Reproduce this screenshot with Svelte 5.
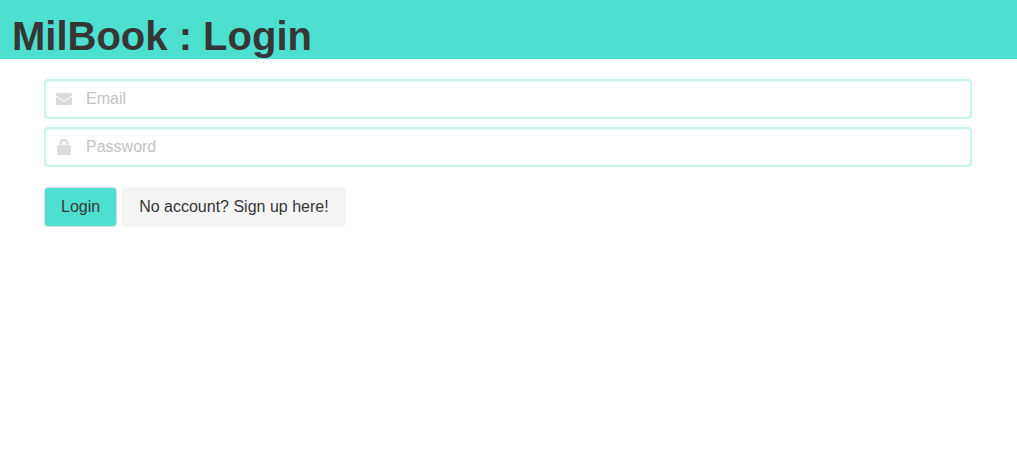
<script>
  let email = $state('');
  let password = $state('');
</script>

<header>
  <h1>MilBook : Login</h1>
</header>
<main>
  <form onsubmit={(e) => e.preventDefault()}>
    <div class="control">
      <input type="email" placeholder="Email" aria-label="Email" bind:value={email} />
      <span class="icon">
        <svg width="16" height="16" viewBox="0 0 512 512" aria-hidden="true">
          <path fill="currentColor" d="M48 64C21.5 64 0 85.5 0 112c0 15.1 7.1 29.3 19.2 38.4L236.800 313.600c11.400 8.500 27 8.500 38.400 0L492.800 150.400c12.100-9.100 19.200-23.300 19.200-38.400 0-26.500-21.500-48-48-48H48zM0 176v208c0 35.300 28.700 64 64 64h384c35.300 0 64-28.700 64-64V176L294.400 339.200c-22.800 17.100-54 17.100-76.800 0L0 176z" />
        </svg>
      </span>
    </div>
    <div class="control">
      <input type="password" placeholder="Password" aria-label="Password" bind:value={password} />
      <span class="icon">
        <svg width="14" height="16" viewBox="0 0 448 512" aria-hidden="true">
          <path fill="currentColor" d="M144 144v48h160v-48c0-44.200-35.800-80-80-80s-80 35.800-80 80zM80 192v-48C80 64.500 144.500 0 224 0s144 64.500 144 144v48h16c35.300 0 64 28.700 64 64v192c0 35.300-28.700 64-64 64H64c-35.300 0-64-28.700-64-64V256c0-35.300 28.700-64 64-64h16z" />
        </svg>
      </span>
    </div>
    <div class="actions">
      <button class="primary" type="submit">Login</button>
      <button class="light" type="button">No account? Sign up here!</button>
    </div>
  </form>
</main>

<style>
  :global(body) {
    background: #fff;
    font-family: "Liberation Sans", Arial, sans-serif;
    font-size: 16px;
  }
  header {
    padding: 14px 12px 0;
    background: #4ddfd0;
  }
  h1 {
    margin: 0;
    color: #363636;
    font-size: 40px;
    font-weight: 700;
    line-height: 45px;
  }
  main {
    padding: 20px 45px 20px 44px;
  }
  form {
    display: flex;
    flex-direction: column;
    gap: 8px;
  }
  .control {
    position: relative;
  }
  input {
    display: block;
    box-sizing: border-box;
    width: 100%;
    height: 40px;
    padding: 0 12px 0 40px;
    border: 2px solid #c9f5f0;
    border-radius: 4px;
    background: #fff;
    box-shadow: inset 0 1px 2px rgba(10, 10, 10, 0.05);
    color: #363636;
    font: inherit;
  }
  input::placeholder {
    color: #c3c3c3;
    opacity: 1;
  }
  input:focus {
    outline: none;
    border-color: #4ddfd0;
  }
  .icon {
    position: absolute;
    inset: 0 auto 0 0;
    display: flex;
    align-items: center;
    justify-content: center;
    width: 40px;
    color: #dbdbdb;
    pointer-events: none;
  }
  .actions {
    display: flex;
    flex-wrap: wrap;
    gap: 5px;
    padding-top: 12px;
  }
  button {
    height: 40px;
    padding: 0 16px;
    border: 1px solid transparent;
    border-radius: 4px;
    color: #363636;
    font: inherit;
    cursor: pointer;
  }
  .primary {
    border-color: #dbdbdb;
    background: #4ddfd0;
  }
  .light {
    background: #f5f5f5;
  }
</style>
